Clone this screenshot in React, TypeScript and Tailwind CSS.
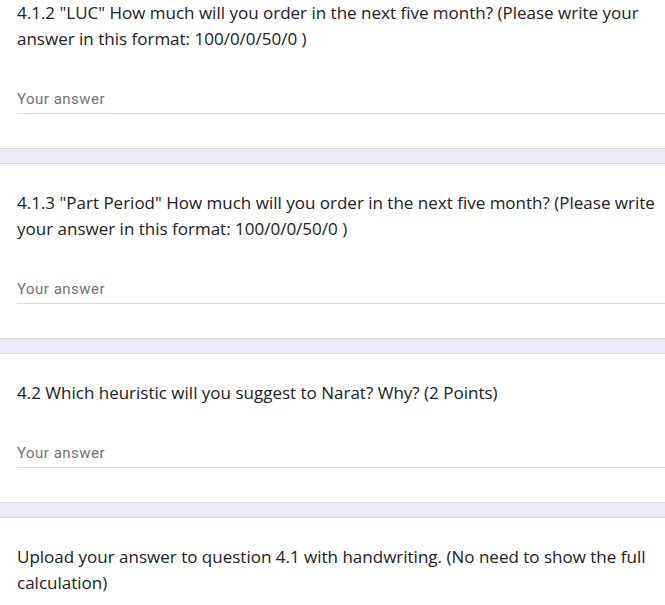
import React from 'react';

type Question = {
  lines: string[];
  withAnswer: boolean;
};

const questions: Question[] = [
  {
    lines: [
      '4.1.2 "LUC" How much will you order in the next five month? (Please write your',
      'answer in this format: 100/0/0/50/0 )',
    ],
    withAnswer: true,
  },
  {
    lines: [
      '4.1.3 "Part Period" How much will you order in the next five month? (Please write',
      'your answer in this format: 100/0/0/50/0 )',
    ],
    withAnswer: true,
  },
  {
    lines: ['4.2 Which heuristic will you suggest to Narat? Why? (2 Points)'],
    withAnswer: true,
  },
  {
    lines: [
      'Upload your answer to question 4.1 with handwriting. (No need to show the full',
      'calculation)',
    ],
    withAnswer: false,
  },
];

const QuestionCard: React.FC<{ q: Question; first: boolean }> = ({ q, first }) => (
  <div
    className={`bg-white border-[#dadce0] pl-[17px] ${
      first ? 'border-b pt-0' : 'border-y pt-[26px]'
    } ${q.withAnswer ? 'pb-[34px]' : 'pb-[40px]'}`}
  >
    <div className="text-[17px] leading-[26px] text-[#202124] font-['Open_Sans',sans-serif]">
      {q.lines.map((line, i) => (
        <div key={i} className="whitespace-nowrap">
          {line}
        </div>
      ))}
    </div>
    {q.withAnswer && (
      <div className="mt-[37px] border-b border-[#dadce0] pb-[4px]">
        <span className="block text-[15px] leading-[20px] text-[#70757a] font-['Roboto',sans-serif] tracking-[0.5px]">
          Your answer
        </span>
      </div>
    )}
  </div>
);

export default function App() {
  return (
    <div className="min-h-screen bg-[#edebf7] overflow-hidden w-[665px]">
      <div className="flex flex-col gap-[14px]">
        {questions.map((q, i) => (
          <QuestionCard key={i} q={q} first={i === 0} />
        ))}
      </div>
    </div>
  );
}
